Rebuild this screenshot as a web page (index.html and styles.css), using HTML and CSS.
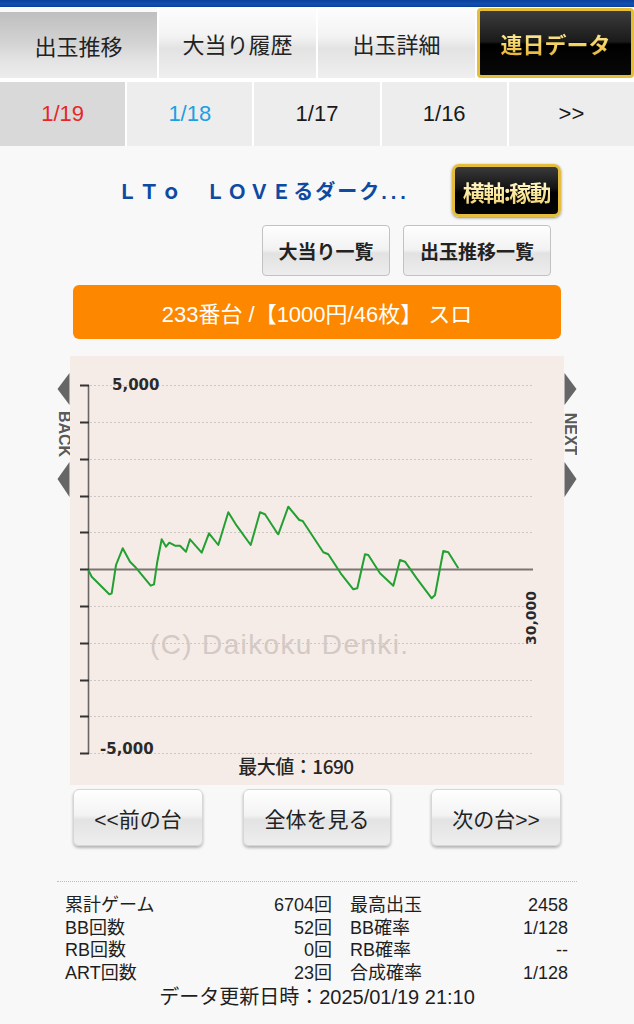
FILE: index.html
```html
<!DOCTYPE html>
<html lang="ja">
<head>
<meta charset="utf-8">
<title>連日データ</title>
<link rel="stylesheet" href="styles.css">
</head>
<body>
<div class="topbar"></div>
<nav class="tabs">
  <a class="tab tab-active">出玉推移</a>
  <a class="tab">大当り履歴</a>
  <a class="tab">出玉詳細</a>
  <a class="tab tab-gold"><span class="gold-text">連日データ</span></a>
</nav>
<nav class="dates">
  <a class="date date-current">1/19</a>
  <a class="date date-prev">1/18</a>
  <a class="date">1/17</a>
  <a class="date">1/16</a>
  <a class="date">&gt;&gt;</a>
</nav>

<main class="main">
  <div class="title-row">
    <h1 class="title">ＬＴｏ　ＬＯＶＥるダーク<span class="dots">...</span></h1>
    <a class="axis-btn"><span class="gold-text light">横軸:稼動</span></a>
  </div>
  <div class="list-row">
    <a class="list-btn list-btn-a">大当り一覧</a>
    <a class="list-btn list-btn-b">出玉推移一覧</a>
  </div>
  <div class="slot-bar">233番台 /【1000円/46枚】 スロ</div>

  <div class="chart">
    <svg width="520" height="429" viewBox="0 0 520 429" xmlns="http://www.w3.org/2000/svg">
      <!-- back / next arrows -->
      <g fill="#666">
        <polygon points="12.5,17 0.5,33 12.5,49"/>
        <polygon points="12.5,106 0.5,123 12.5,141"/>
        <polygon points="507.5,17 519.5,33 507.5,49"/>
        <polygon points="507.5,106 519.5,123 507.5,141"/>
      </g>
      <text transform="translate(1.5 78) rotate(90)" text-anchor="middle" class="navtxt">BACK</text>
      <text transform="translate(507.5 78) rotate(90)" text-anchor="middle" class="navtxt">NEXT</text>

      <g transform="translate(13 0)">
        <rect x="0" y="0" width="494" height="429" fill="#f6ece7"/>
        <g stroke="#cfc6c2" stroke-width="1" stroke-dasharray="2 2">
          <line x1="20" y1="29.5" x2="463" y2="29.5"/>
          <line x1="20" y1="66.5" x2="463" y2="66.5"/>
          <line x1="20" y1="103.5" x2="463" y2="103.5"/>
          <line x1="20" y1="140.5" x2="463" y2="140.5"/>
          <line x1="20" y1="176.5" x2="463" y2="176.5"/>
          <line x1="20" y1="250.5" x2="463" y2="250.5"/>
          <line x1="20" y1="287.5" x2="463" y2="287.5"/>
          <line x1="20" y1="324.5" x2="463" y2="324.5"/>
          <line x1="20" y1="360.5" x2="463" y2="360.5"/>
          <line x1="20" y1="397.5" x2="463" y2="397.5"/>
        </g>
        <text x="80" y="298" class="watermark" textLength="258">(C) Daikoku Denki.</text>
        <line x1="18" y1="213.5" x2="463" y2="213.5" stroke="#7a7572" stroke-width="2"/>
        <line x1="18.5" y1="29" x2="18.5" y2="398" stroke="#6b6664" stroke-width="1.6"/>
        <g stroke="#333" stroke-width="2">
          <line x1="10" y1="29.5" x2="19" y2="29.5"/>
          <line x1="10" y1="66.5" x2="19" y2="66.5"/>
          <line x1="10" y1="103.5" x2="19" y2="103.5"/>
          <line x1="10" y1="140.5" x2="19" y2="140.5"/>
          <line x1="10" y1="176.5" x2="19" y2="176.5"/>
          <line x1="10" y1="213.5" x2="19" y2="213.5"/>
          <line x1="10" y1="250.5" x2="19" y2="250.5"/>
          <line x1="10" y1="287.5" x2="19" y2="287.5"/>
          <line x1="10" y1="324.5" x2="19" y2="324.5"/>
          <line x1="10" y1="360.5" x2="19" y2="360.5"/>
          <line x1="10" y1="397.5" x2="19" y2="397.5"/>
        </g>
        <polyline fill="none" stroke="#23a032" stroke-width="2" stroke-linejoin="round" points="18.3,214 21.7,220.7 39.3,238.3 41.7,237.3 46,209 52.7,192.3 60,205.7 65,210.7 80.7,229.7 84,228.3 87.3,205.7 91.7,183.3 96,190.7 99.3,186.7 105,189.7 110,189.7 116,195.7 120,183.3 131.7,196.7 139,177.3 148.3,189 158.3,156.3 166.7,169.7 180.7,189 190,156.3 195,158.3 206.7,176.3 208.3,178.3 218.3,150.7 229.3,164 232.7,165 253.3,196.3 258.3,198.3 270.7,217.3 283.3,233.3 287.3,232.3 295,198.3 298.3,199 310,217.3 323.3,229.7 330,204 335,205.7 346.7,222.3 361.7,242.3 365,239 373.3,195 378.3,196.3 388.3,212.3"/>
        <text x="42" y="34" class="axis">5,000</text>
        <text x="30" y="398" class="axis">-5,000</text>
        <text transform="translate(466 262) rotate(-90)" text-anchor="middle" class="axis small">30,000</text>
        <text x="226" y="418" text-anchor="middle" class="maxval">最大値：1690</text>
      </g>
    </svg>
  </div>

  <div class="nav-row">
    <a class="nav-btn nav-btn-side">&lt;&lt;前の台</a>
    <a class="nav-btn nav-btn-mid">全体を見る</a>
    <a class="nav-btn nav-btn-side">次の台&gt;&gt;</a>
  </div>

  <div class="sep"></div>

  <div class="stats">
    <span class="k">累計ゲーム</span><span class="v">6704回</span><span class="k k2">最高出玉</span><span class="v">2458</span>
    <span class="k">BB回数</span><span class="v">52回</span><span class="k k2">BB確率</span><span class="v">1/128</span>
    <span class="k">RB回数</span><span class="v">0回</span><span class="k k2">RB確率</span><span class="v">--</span>
    <span class="k">ART回数</span><span class="v">23回</span><span class="k k2">合成確率</span><span class="v">1/128</span>
  </div>
  <p class="updated">データ更新日時：2025/01/19 21:10</p>
</main>
</body>
</html>
```

FILE: styles.css
```css
* { box-sizing: border-box; }

body {
  margin: 0;
  background: #f8f8f8;
  font-family: "Liberation Sans", "Noto Sans CJK JP", sans-serif;
  color: #222;
}

a { text-decoration: none; color: inherit; }

.topbar {
  height: 8px;
  background: linear-gradient(#0a3f98, #1250b6 50%, #0b3f98 85%, #ffffff 85%);
}

/* ---- tabs ---- */
.tabs {
  display: grid;
  grid-template-columns: repeat(4, 1fr);
  gap: 2px;
  height: 70px;
  background: #fff;
}

.tab {
  display: flex;
  align-items: center;
  justify-content: center;
  font-size: 22px;
  color: #222;
  background: linear-gradient(#fdfdfd 0%, #f3f3f3 40%, #e3e3e3 58%, #efefef 100%);
}

.tab-active {
  border-top: 4px solid #fafafa;
  background: linear-gradient(#bfbfbf 0%, #d2d2d2 45%, #e4e4e4 75%, #ececec 100%);
}

.tab-gold {
  border: 3px solid #e6bd38;
  border-radius: 4px;
  background: linear-gradient(#3c3c3c 0%, #1a1a1a 48%, #000 52%, #080808 100%);
  font-weight: bold;
}

.gold-text {
  background: linear-gradient(#fff3b8 0%, #f6d66a 50%, #e1ac2a 100%);
  -webkit-background-clip: text;
  background-clip: text;
  color: transparent;
}

.gold-text.light {
  background: linear-gradient(#fffbe0 0%, #fbeaa2 55%, #f0cf6e 100%);
  -webkit-background-clip: text;
  background-clip: text;
}

/* ---- dates ---- */
.dates {
  display: grid;
  grid-template-columns: repeat(5, 1fr);
  gap: 2px;
  height: 68px;
  padding-top: 4px;
  background: #fff;
}

.date {
  display: flex;
  align-items: center;
  justify-content: center;
  font-size: 22px;
  color: #1a1a1a;
  background: #ededed;
}

.date-current { background: #d9d9d9; color: #e8262a; }
.date-prev { color: #1c9fe3; }

/* ---- main ---- */
.main {
  padding: 18px 73px 0;
}

.title-row {
  display: flex;
  align-items: center;
  height: 53px;
}

.title {
  flex: 1;
  margin: 0;
  padding-left: 2px;
  text-align: center;
  font-size: 20px;
  font-weight: bold;
  letter-spacing: 2px;
  color: #0e4aa2;
  font-family: "Noto Sans CJK JP", sans-serif;
}

.dots { letter-spacing: 4px; font-family: "Liberation Sans", sans-serif; }

.axis-btn {
  width: 109px;
  height: 53px;
  display: flex;
  align-items: center;
  justify-content: center;
  border: 3px solid #e4bd3e;
  border-radius: 7px;
  background: linear-gradient(#3a3a3a 0%, #141414 45%, #000 55%, #050505 100%);
  box-shadow: 0 1px 3px rgba(0, 0, 0, .45);
  font-size: 22px;
  font-weight: bold;
  letter-spacing: -1.5px;
  white-space: nowrap;
  font-family: "Noto Sans CJK JP", sans-serif;
}

.list-row {
  display: flex;
  justify-content: flex-end;
  gap: 13px;
  margin-top: 8px;
  padding-right: 10px;
}

.list-btn {
  height: 51px;
  display: flex;
  align-items: center;
  justify-content: center;
  border: 1px solid #c2c2c2;
  border-radius: 4px;
  background: linear-gradient(#fefefe 0%, #f2f2f2 48%, #e2e2e2 56%, #ededed 100%);
  font-size: 19px;
  font-weight: bold;
  color: #222;
  font-family: "Noto Sans CJK JP", sans-serif;
}
.list-btn-a { width: 128px; }
.list-btn-b { width: 148px; }

.slot-bar {
  margin-top: 9px;
  height: 54px;
  display: flex;
  align-items: center;
  justify-content: center;
  border-radius: 6px;
  background: #fe8700;
  color: #fff;
  font-size: 22px;
}

/* ---- chart ---- */
.chart {
  margin: 17px -16px 0;
  height: 429px;
}
.chart svg { display: block; }

.navtxt {
  font-family: "Liberation Sans", sans-serif;
  font-size: 16px;
  font-weight: bold;
  fill: #5a5a5a;
}

.watermark {
  font-family: "Liberation Sans", sans-serif;
  font-size: 28px;
  fill: #d3c9c5;
}

.axis {
  font-family: "DejaVu Sans", sans-serif;
  font-size: 15px;
  font-weight: bold;
  fill: #2a2a2a;
}
.axis.small { font-size: 14px; }

.maxval {
  font-family: "Noto Sans CJK JP", sans-serif;
  font-size: 19px;
  font-weight: 500;
  fill: #262626;
  letter-spacing: -0.5px;
}

/* ---- bottom nav ---- */
.nav-row {
  display: flex;
  justify-content: space-between;
  margin-top: 4px;
}

.nav-btn {
  height: 57px;
  display: flex;
  align-items: center;
  justify-content: center;
  border: 1px solid #d6d6d6;
  border-radius: 6px;
  background: linear-gradient(#ffffff 0%, #f3f3f3 46%, #e3e3e3 54%, #eeeeee 100%);
  box-shadow: 0 2px 3px rgba(0, 0, 0, .28);
  font-size: 21px;
  color: #222;
}
.nav-btn-side { width: 130px; }
.nav-btn-mid { width: 148px; }

.sep {
  margin: 35px -16px 0;
  border-top: 1px dotted #bdbdbd;
}

/* ---- stats ---- */
.stats {
  display: grid;
  grid-template-columns: 135px 132px 138px 98px;
  margin: 12px -7px 0 -8px;
  font-size: 18px;
  line-height: 22.7px;
  color: #1e1e1e;
}

.stats .v { text-align: right; }
.stats .k2 { padding-left: 18px; }

.updated {
  margin: 0;
  text-align: center;
  font-size: 20px;
  line-height: 24px;
  color: #1e1e1e;
}
```
